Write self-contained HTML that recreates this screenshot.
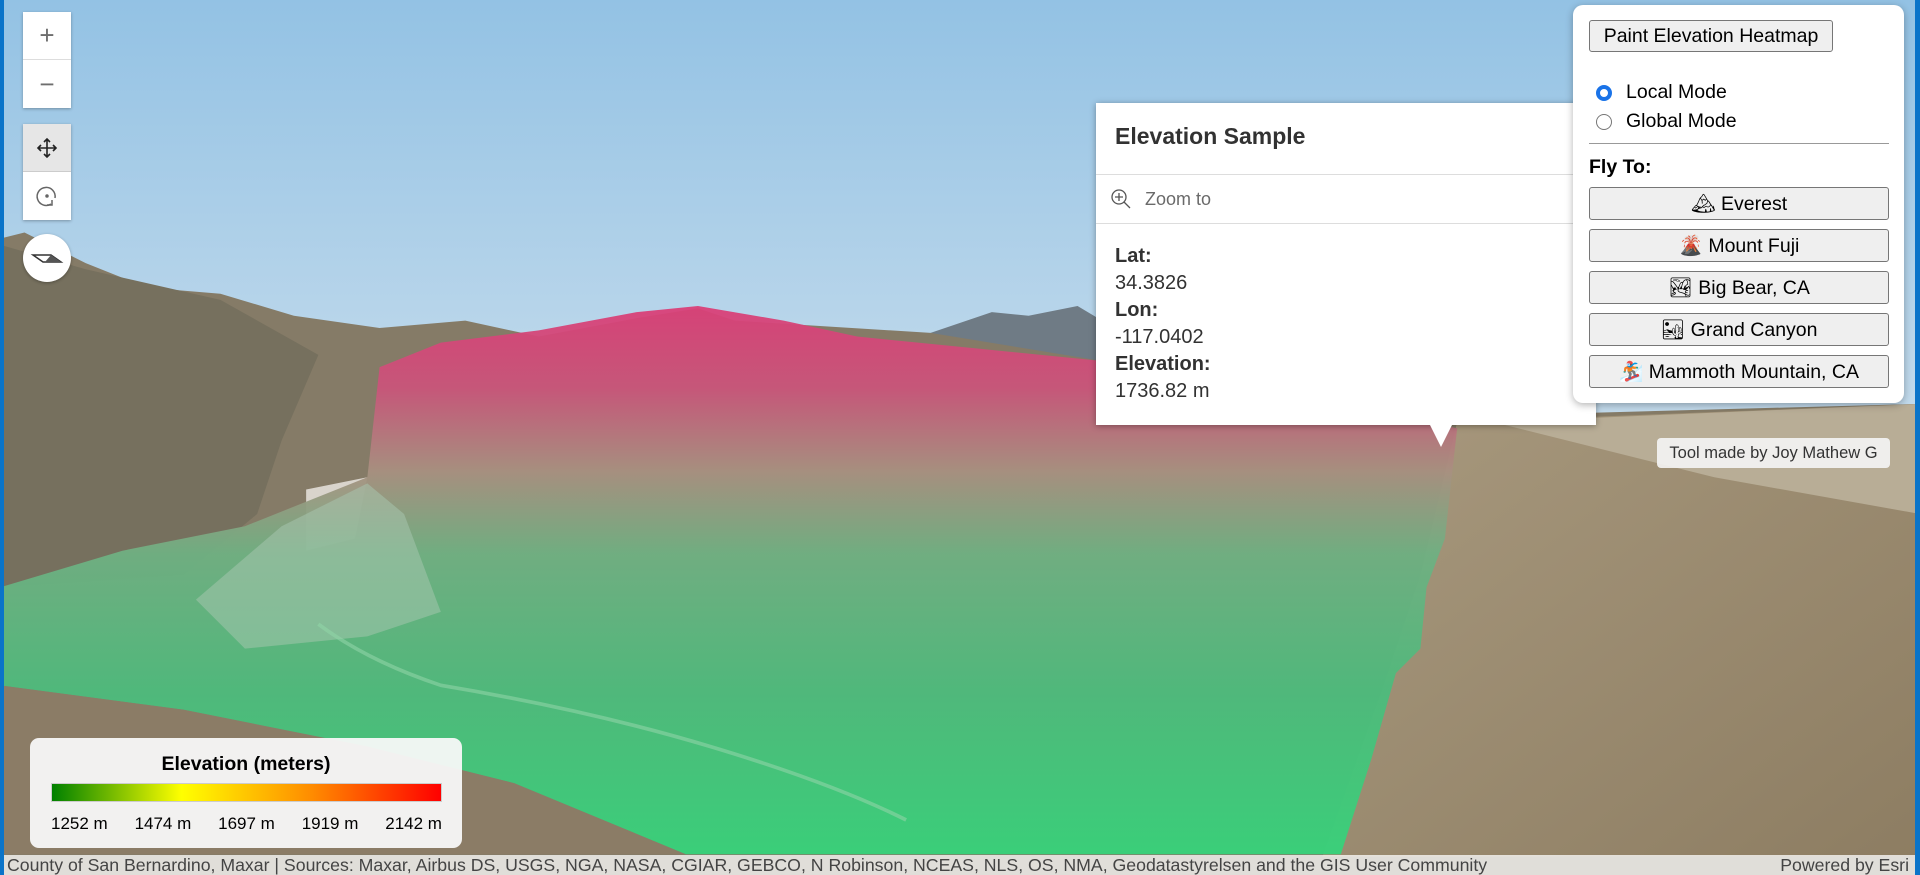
<!DOCTYPE html>
<html><head><meta charset="utf-8"><style>
*{box-sizing:border-box;margin:0;padding:0}
body{width:1920px;height:875px;overflow:hidden;position:relative;font-family:"Liberation Sans",Arial,sans-serif;background:#a9cbe6}
#bg{position:absolute;left:0;top:0;width:1920px;height:875px}
.lb{position:absolute;left:0;top:0;width:4px;height:875px;background:#0a74c9}
.rb{position:absolute;right:0;top:0;width:5px;height:875px;background:#0a74c9}
.zb{position:absolute;left:23px;width:48px;background:#fff;box-shadow:0 1px 3px rgba(0,0,0,.3)}
.zb div{height:48px;display:flex;align-items:center;justify-content:center;color:#6e6e6e;font-size:26px}
.panel{position:absolute;left:1573px;top:5px;width:331px;height:398px;background:#fff;border-radius:10px;box-shadow:0 2px 8px rgba(0,0,0,.3)}
.btn{position:absolute;background:#efefef;border:1px solid #767676;border-radius:3px;font-size:19.5px;color:#000;display:flex;align-items:center;justify-content:center;height:33px}
.pop{position:absolute;left:1096px;top:103px;width:500px;height:322px;background:#fff;box-shadow:0 1px 6px rgba(0,0,0,.35);color:#323232}
.att{position:absolute;left:4px;right:5px;top:855px;height:20px;background:rgba(255,255,255,.75);font-size:17.7px;color:#444;line-height:20px;padding-left:3px;white-space:nowrap}
</style></head><body>
<svg id="bg" viewBox="0 0 1568 715" preserveAspectRatio="none">
<defs>
<linearGradient id="sky" x1="0" y1="0" x2="0" y2="1"><stop offset="0" stop-color="#93c2e4"/><stop offset=".6" stop-color="#cfe1ee"/><stop offset="1" stop-color="#dde9f0"/></linearGradient>
<linearGradient id="hm" x1="0" y1="250" x2="0" y2="700" gradientUnits="userSpaceOnUse"><stop offset="0" stop-color="#da3f78"/><stop offset=".15" stop-color="#c9557a"/><stop offset=".3" stop-color="#a89080"/><stop offset=".45" stop-color="#6fb082"/><stop offset=".7" stop-color="#4dbb7c"/><stop offset="1" stop-color="#36d37a"/></linearGradient>
<linearGradient id="rt" x1="0" y1="0" x2="1" y2="1"><stop offset="0" stop-color="#a8997e"/><stop offset="1" stop-color="#8d7d62"/></linearGradient>
</defs>
<rect width="1568" height="715" fill="url(#sky)"/>
<path d="M760 272 L810 255 L840 258 L880 250 L900 262 L900 300 L760 300Z" fill="#6f7b85"/>
<path d="M0 195 L20 190 L70 215 L120 235 L180 240 L240 258 L310 268 L380 262 L440 275 L520 260 L570 252 L600 262 L760 272 L900 295 L1200 340 L1568 330 L1568 715 L0 715Z" fill="#857b67"/>
<path d="M0 200 L70 220 L180 245 L260 290 L230 360 L210 420 L150 470 L0 480Z" fill="#76705e"/>
<path d="M1190 345 L1568 330 L1568 700 L1080 700 L1130 560 L1160 470Z" fill="url(#rt)"/>
<path d="M1220 345 L1568 330 L1568 420 L1400 390Z" fill="#b8ad96"/>
<path d="M250 400 L300 390 L290 440 L250 450Z" fill="#d9d4cc"/>
<path d="M310 300 L360 280 L440 270 L520 255 L570 250 L640 262 L700 275 L800 285 L900 295 L1060 320 L1190 350 L1180 440 L1165 480 L1160 530 L1140 550 L1120 620 L1095 698 L560 698 L420 640 L300 610 L150 580 L0 560 L0 480 L100 450 L200 430 L300 390Z" fill="url(#hm)" opacity=".95"/>
<path d="M160 490 L230 430 L300 395 L330 420 L360 500 L300 520 L200 530Z" fill="#a9c7b2" opacity=".5"/>
<path d="M260 510 Q300 540 360 560 Q480 580 580 610 Q680 640 740 670" stroke="#8fd4a6" stroke-width="3" fill="none" opacity=".6"/>
<path d="M0 560 L150 580 L300 610 L420 640 L560 698 L0 698Z" fill="#8b7c66"/>
</svg>
<div class="lb"></div><div class="rb"></div>
<div class="zb" style="top:12px"><div style="border-bottom:1px solid #ddd">+</div><div>−</div></div>
<div class="zb" style="top:124px"><div style="background:#e6e6e6;border-bottom:1px solid #ccc"><svg width="22" height="22" viewBox="0 0 22 22" fill="none" stroke="#222" stroke-width="1.6"><path d="M11 2V20M2 11H20M8 5L11 2L14 5M8 17L11 20L14 17M5 8L2 11L5 14M17 8L20 11L17 14"/></svg></div><div><svg width="24" height="24" viewBox="0 0 24 24" fill="none" stroke="#666" stroke-width="1.5"><path d="M16 20A9 9 0 1 1 20 14"/><path d="M17 16V21H12"/><circle cx="12" cy="12" r="1" fill="#666"/></svg></div></div>
<div style="position:absolute;left:23px;top:234px;width:48px;height:48px;border-radius:50%;background:#fff;box-shadow:0 1px 3px rgba(0,0,0,.3)"><svg width="48" height="48" viewBox="0 0 48 48"><path d="M10 21L28 21L38 28L20 28Z" fill="#fff" stroke="#333" stroke-width="1.5"/><path d="M28 21L38 28L22 28Z" fill="#555"/></svg></div>
<div class="pop">
<div style="height:72px;border-bottom:1px solid #ddd;padding:20px 19px;font-size:23px;font-weight:bold">Elevation Sample</div>
<div style="height:49px;border-bottom:1px solid #ddd;display:flex;align-items:center;padding-left:13px;font-size:18px;color:#6a6a6a"><svg width="24" height="24" viewBox="0 0 24 24" fill="none" stroke="#555" stroke-width="1.3"><circle cx="10" cy="10" r="7"/><path d="M10 6V14M6 10H14M15 15L21 21"/></svg><span style="margin-left:12px">Zoom to</span></div>
<div style="padding:19px 19px;font-size:20px;line-height:27px"><b>Lat:</b><br>34.3826<br><b>Lon:</b><br>-117.0402<br><b>Elevation:</b><br>1736.82 m</div>
</div>
<div style="position:absolute;left:1430px;top:425px;width:0;height:0;border-left:11px solid transparent;border-right:11px solid transparent;border-top:22px solid #fff"></div>
<div style="position:absolute;left:1657px;top:438px;width:233px;height:30px;background:rgba(245,245,245,.9);border-radius:4px;font-size:16.5px;color:#333;display:flex;align-items:center;justify-content:center">Tool made by Joy Mathew G</div>
<div class="panel">
<div class="btn" style="left:16px;top:15px;width:244px;height:32px">Paint Elevation Heatmap</div>
<div style="position:absolute;left:23px;top:73px;font-size:19.5px;line-height:29px">
<div style="display:flex;align-items:center"><span style="width:16px;height:16px;border-radius:50%;border:4px solid #1a73e8;background:#fff;display:inline-block;margin-right:14px"></span>Local Mode</div>
<div style="display:flex;align-items:center"><span style="width:16px;height:16px;border-radius:50%;border:1px solid #767676;background:#fff;display:inline-block;margin-right:14px"></span>Global Mode</div></div>
<div style="position:absolute;left:16px;top:138px;width:300px;border-top:1px solid #999"></div>
<div style="position:absolute;left:16px;top:151px;font-size:19.5px;font-weight:bold">Fly To:</div>
<div class="btn" style="left:16px;top:182px;width:300px">🏔 Everest</div>
<div class="btn" style="left:16px;top:224px;width:300px">🌋 Mount Fuji</div>
<div class="btn" style="left:16px;top:266px;width:300px">🏞 Big Bear, CA</div>
<div class="btn" style="left:16px;top:308px;width:300px">🏜 Grand Canyon</div>
<div class="btn" style="left:16px;top:350px;width:300px">🏂 Mammoth Mountain, CA</div>
</div>
<div style="position:absolute;left:30px;top:738px;width:432px;height:110px;background:rgba(248,248,248,.95);border-radius:9px">
<div style="text-align:center;margin-top:15px;font-size:19.5px;font-weight:bold">Elevation (meters)</div>
<div style="position:absolute;left:21px;top:45px;width:391px;height:19px;border:1px solid #ccc;background:linear-gradient(to right,#008000,#ffff00,#ff8c00,#ff0000)"></div>
<div style="position:absolute;left:21px;top:76px;width:391px;display:flex;justify-content:space-between;font-size:17px">
<span>1252 m</span><span>1474 m</span><span>1697 m</span><span>1919 m</span><span>2142 m</span></div></div>
<div class="att">County of San Bernardino, Maxar | Sources: Maxar, Airbus DS, USGS, NGA, NASA, CGIAR, GEBCO, N Robinson, NCEAS, NLS, OS, NMA, Geodatastyrelsen and the GIS User Community<span style="position:absolute;right:6px">Powered by Esri</span></div>
</body></html>
